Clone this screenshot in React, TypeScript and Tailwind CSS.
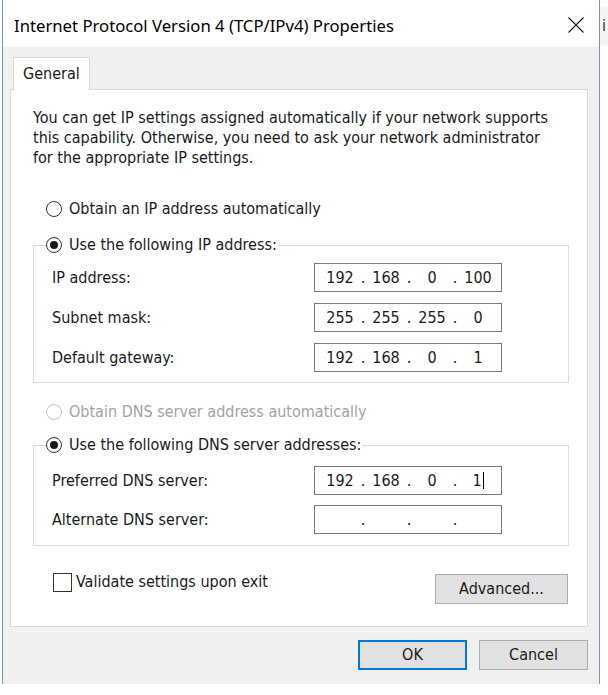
type RadioProps = {
  label: string;
  checked?: boolean;
  disabled?: boolean;
};

const Radio = ({ label, checked = false, disabled = false }: RadioProps) => {
  return (
    <div className="flex h-[20px] items-center">
      <span
        className={`flex size-[16px] items-center justify-center rounded-full border bg-white ${
          disabled ? 'border-[#c4c4c4]' : 'border-[#333333]'
        }`}
      >
        {checked ? <span className="size-[8px] rounded-full bg-[#1a1a1a]" /> : null}
      </span>
      <span className={`ml-[7px] whitespace-nowrap ${disabled ? 'text-[#a3a3a3]' : 'text-[#1a1a1a]'}`}>
        {label}
      </span>
    </div>
  );
};

type IpFieldProps = {
  parts: string[];
  caret?: boolean;
};

const IpField = ({ parts, caret = false }: IpFieldProps) => {
  return (
    <div className="flex h-[29px] w-[188px] items-center border border-[#7a7a7a] bg-white pl-[8px] text-[#1a1a1a]">
      {parts.map((part, i) => (
        <div key={i} className="flex items-center">
          {i > 0 ? <span className="w-[12px] text-center">.</span> : null}
          <span className="flex w-[34px] items-center justify-center">
            {part}
            {caret && i === parts.length - 1 ? (
              <span className="ml-px inline-block h-[17px] w-px bg-black" />
            ) : null}
          </span>
        </div>
      ))}
    </div>
  );
};

type FieldRowProps = {
  label: string;
  parts: string[];
  caret?: boolean;
};

const FieldRow = ({ label, parts, caret }: FieldRowProps) => {
  return (
    <div className="flex items-center">
      <span className="w-[262px] whitespace-nowrap text-[#1a1a1a]">{label}</span>
      <IpField parts={parts} caret={caret} />
    </div>
  );
};

type ButtonProps = {
  children: string;
  primary?: boolean;
  className?: string;
};

const Button = ({ children, primary = false, className = '' }: ButtonProps) => {
  return (
    <button
      type="button"
      className={`flex h-[30px] items-center justify-center bg-[#e1e1e1] text-[#1a1a1a] ${
        primary ? 'border-2 border-[#0078d7]' : 'border border-[#adadad]'
      } ${className}`}
    >
      {children}
    </button>
  );
};

export default function App() {
  return (
    <div className="flex h-[695px] w-[608px] overflow-hidden bg-white font-['DejaVu_Sans_Condensed','DejaVu_Sans',sans-serif] text-[16px] leading-[20px]">
      <div className="ml-[2px] flex h-[684px] w-[598px] shrink-0 flex-col border-x border-[#7b97b8]">
        {/* title bar */}
        <div className="flex h-[47px] shrink-0 items-center justify-between bg-white pt-[4px] pl-[11px] pr-[15px]">
          <span className="font-['Noto_Sans',sans-serif] text-[16.7px] text-black">
            Internet Protocol Version 4 (TCP/IPv4) Properties
          </span>
          <svg width="16" height="16" viewBox="0 0 16 16" className="-mt-[2px]">
            <path d="M0.5 0.5 L15.5 15.5 M15.5 0.5 L0.5 15.5" stroke="#1a1a1a" strokeWidth="1.1" fill="none" />
          </svg>
        </div>

        <div className="flex flex-1 flex-col bg-[#f0f0f0] pl-[7px] pr-[11px]">
          {/* tab strip */}
          <div className="flex pt-[10px] pl-[3px]">
            <div className="relative z-10 -mb-px flex h-[33px] w-[77px] items-start border-x border-t border-[#d9d9d9] bg-white pt-[6px] pl-[9px] text-[#1a1a1a]">
              General
            </div>
          </div>

          {/* tab panel */}
          <div className="flex h-[538px] flex-col border border-[#d9d9d9] bg-white pt-[18px] pr-[18px] pl-[22px]">
            <p className="text-[#1a1a1a]">
              You can get IP settings assigned automatically if your network supports
              <br />
              this capability. Otherwise, you need to ask your network administrator
              <br />
              for the appropriate IP settings.
            </p>

            <div className="mt-[31px] pl-[13px]">
              <Radio label="Obtain an IP address automatically" />
            </div>

            <fieldset className="mt-[16px] border border-[#dcdcdc]">
              <legend className="ml-[12px] pr-[1px]">
                <Radio label="Use the following IP address:" checked />
              </legend>
              <div className="flex flex-col gap-[11px] pt-[8px] pb-[10px] pl-[18px]">
                <FieldRow label="IP address:" parts={['192', '168', '0', '100']} />
                <FieldRow label="Subnet mask:" parts={['255', '255', '255', '0']} />
                <FieldRow label="Default gateway:" parts={['192', '168', '0', '1']} />
              </div>
            </fieldset>

            <div className="mt-[19px] pl-[13px]">
              <Radio label="Obtain DNS server address automatically" disabled />
            </div>

            <fieldset className="mt-[13px] border border-[#dcdcdc]">
              <legend className="ml-[12px] pr-[1px]">
                <Radio label="Use the following DNS server addresses:" checked />
              </legend>
              <div className="flex flex-col gap-[10px] pt-[11px] pb-[11px] pl-[18px]">
                <FieldRow label="Preferred DNS server:" parts={['192', '168', '0', '1']} caret />
                <FieldRow label="Alternate DNS server:" parts={['', '', '', '']} />
              </div>
            </fieldset>

            <div className="mt-[26px] flex items-start justify-between pr-px pl-[20px]">
              <div className="flex h-[20px] items-center">
                <span className="size-[19px] border border-[#333333] bg-white" />
                <span className="ml-[4px] text-[#1a1a1a]">Validate settings upon exit</span>
              </div>
              <Button className="mt-[2px] w-[133px]">Advanced...</Button>
            </div>
          </div>

          {/* dialog buttons */}
          <div className="mt-[13px] flex justify-end gap-[12px]">
            <Button primary className="w-[109px]">
              OK
            </Button>
            <Button className="w-[109px]">Cancel</Button>
          </div>
        </div>
      </div>

      {/* sliver of the window behind */}
      <div className="flex-1 pt-[7px]">
        <div className="flex h-[38px] items-center overflow-hidden bg-[#f3f3f3] pl-[2px] text-[#333333]">i</div>
      </div>
    </div>
  );
}
